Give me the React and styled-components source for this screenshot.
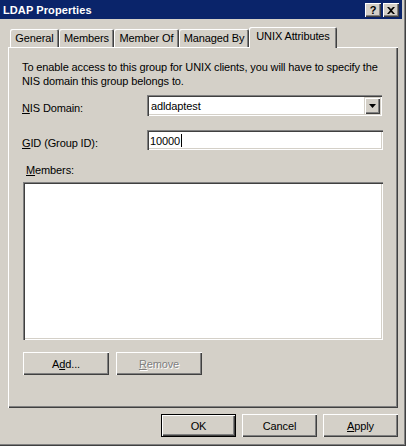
import React from 'react'
import styled, { createGlobalStyle } from 'styled-components'

const GlobalStyle = createGlobalStyle`
  html, body {
    margin: 0;
    padding: 0;
    background: #d4d0c8;
  }
  body {
    font-family: Tahoma, "Liberation Sans", Arial, sans-serif;
    font-size: 11px;
    letter-spacing: -0.12px;
    color: #000;
  }
`

const tabs = [
    { label: 'General', width: 49 },
    { label: 'Members', width: 55 },
    { label: 'Member Of', width: 65 },
    { label: 'Managed By', width: 70 },
    { label: 'UNIX Attributes', width: 88, active: true },
]

function App() {
    return (
        <>
            <GlobalStyle />
            <Window>
                <TitleBar>
                    <Title>LDAP Properties</Title>
                    <CaptionButtons>
                        <CaptionButton>?</CaptionButton>
                        <CaptionButton>
                            <svg width="8" height="7" viewBox="0 0 8 7">
                                <path d="M0 0h2l2 2 2-2h2L5 3.5 8 7H6L4 5 2 7H0l3-3.5z" fill="#000" />
                            </svg>
                        </CaptionButton>
                    </CaptionButtons>
                </TitleBar>
                <Body>
                    <TabStrip>
                        {tabs.map(t => (
                            <Tab key={t.label} $width={t.width} $active={t.active}>{t.label}</Tab>
                        ))}
                    </TabStrip>
                    <Panel>
                        <Description>
                            To enable access to this group for UNIX clients, you will have to specify the<br />
                            NIS domain this group belongs to.
                        </Description>
                        <FieldRow $top={7}>
                            <Label><u>N</u>IS Domain:</Label>
                            <Combo>
                                <FieldText>adldaptest</FieldText>
                                <DropButton>
                                    <svg width="7" height="4" viewBox="0 0 7 4">
                                        <path d="M0 0h7L3.5 4z" fill="#000" />
                                    </svg>
                                </DropButton>
                            </Combo>
                        </FieldRow>
                        <FieldRow $top={14}>
                            <Label><u>G</u>ID (Group ID):</Label>
                            <TextField>
                                <FieldText>10000</FieldText>
                                <Caret />
                            </TextField>
                        </FieldRow>
                        <MembersLabel><u>M</u>embers:</MembersLabel>
                        <ListBox />
                        <ButtonRow>
                            <Button $width={86}>A<u>d</u>d...</Button>
                            <Button $width={86} disabled><u>R</u>emove</Button>
                        </ButtonRow>
                    </Panel>
                    <Footer>
                        <Button $default>OK</Button>
                        <Button>Cancel</Button>
                        <Button><u>A</u>pply</Button>
                    </Footer>
                </Body>
            </Window>
        </>
    )
}

const Window = styled.div`
    width: 406px;
    height: 446px;
    box-sizing: border-box;
    padding: 0 4px 4px 0;
    background: #d4d0c8;
    box-shadow: inset -1px -1px #404040, inset -2px -2px #808080;
    display: flex;
    flex-direction: column;
`

const TitleBar = styled.div`
    height: 19px;
    background: #0a246a;
    display: flex;
    align-items: center;
    justify-content: space-between;
    padding: 0 3px 0 3px;
`

const Title = styled.div`
    color: #fff;
    font-weight: bold;
    font-size: 11px;
    letter-spacing: 0.1px;
`

const CaptionButtons = styled.div`
    display: flex;
    gap: 2px;
    margin-top: 1px;
`

const CaptionButton = styled.div`
    width: 16px;
    height: 14px;
    box-sizing: border-box;
    background: #d4d0c8;
    box-shadow: inset 1px 1px #fff, inset -1px -1px #404040, inset -2px -2px #808080;
    display: flex;
    align-items: center;
    justify-content: center;
    font-weight: bold;
    font-size: 11px;
    line-height: 14px;
`

const Body = styled.div`
    flex: 1;
    display: flex;
    flex-direction: column;
    padding: 8px 0 0 8px;
`

const TabStrip = styled.div`
    display: flex;
    align-items: flex-end;
    height: 20px;
    padding-left: 2px;
    position: relative;
    z-index: 1;
`

const Tab = styled.div`
    width: ${p => p.$width}px;
    height: ${p => (p.$active ? 21 : 18)}px;
    margin-bottom: ${p => (p.$active ? -1 : 0)}px;
    box-sizing: border-box;
    background: #d4d0c8;
    border-radius: 2px 2px 0 0;
    box-shadow: inset 1px 1px #fff, inset -1px 0 #404040, inset -2px 0 #808080;
    display: flex;
    justify-content: center;
    padding-top: 3px;
    white-space: nowrap;
`

const Panel = styled.div`
    width: 390px;
    height: 361px;
    box-sizing: border-box;
    box-shadow: inset 1px 1px #fff, inset -1px -1px #404040, inset -2px -2px #808080;
    padding: 13px 15px 0 14px;
    display: flex;
    flex-direction: column;
`

const Description = styled.div`
    line-height: 14px;
    white-space: nowrap;
`

const FieldRow = styled.div`
    display: flex;
    align-items: center;
    margin-top: ${p => p.$top}px;
`

const Label = styled.div`
    width: 125px;
    padding-top: 5px;
`

const Sunken = styled.div`
    box-sizing: border-box;
    background: #fff;
    box-shadow: inset 1px 1px #808080, inset 2px 2px #404040, inset -1px -1px #fff, inset -2px -2px #d4d0c8;
    display: flex;
    align-items: center;
`

const Combo = styled(Sunken)`
    width: 235px;
    height: 21px;
    padding: 0 2px 0 4px;
    justify-content: space-between;
`

const TextField = styled(Sunken)`
    width: 236px;
    height: 20px;
    padding: 0 2px 0 3px;
`

const FieldText = styled.span`
    padding-top: 1px;
`

const Caret = styled.span`
    width: 1px;
    height: 13px;
    background: #000;
    margin-left: 1px;
`

const DropButton = styled.div`
    width: 16px;
    height: 17px;
    box-sizing: border-box;
    background: #d4d0c8;
    box-shadow: inset 1px 1px #d4d0c8, inset 2px 2px #fff, inset -1px -1px #404040, inset -2px -2px #808080;
    display: flex;
    align-items: center;
    justify-content: center;
`

const MembersLabel = styled.div`
    margin: 14px 0 0 4px;
    line-height: 13px;
`

const ListBox = styled(Sunken)`
    width: 360px;
    height: 158px;
    margin: 5px 0 0 1px;
`

const ButtonRow = styled.div`
    display: flex;
    gap: 7px;
    margin: 12px 0 0 1px;
`

const Button = styled.button`
    width: ${p => p.$width || 75}px;
    height: 23px;
    box-sizing: border-box;
    font: inherit;
    letter-spacing: inherit;
    color: #000;
    background: #d4d0c8;
    border: none;
    border-radius: 0;
    padding: 0;
    box-shadow: ${p => (p.$default
        ? 'inset 0 0 0 1px #000, inset 2px 2px #fff, inset -2px -2px #404040, inset -3px -3px #808080'
        : 'inset 1px 1px #fff, inset -1px -1px #404040, inset -2px -2px #808080')};
    &:disabled {
        color: #808080;
        text-shadow: 1px 1px #fff;
    }
`

const Footer = styled.div`
    display: flex;
    justify-content: flex-end;
    gap: 6px;
    width: 390px;
    margin-top: 6px;
`

export default App
